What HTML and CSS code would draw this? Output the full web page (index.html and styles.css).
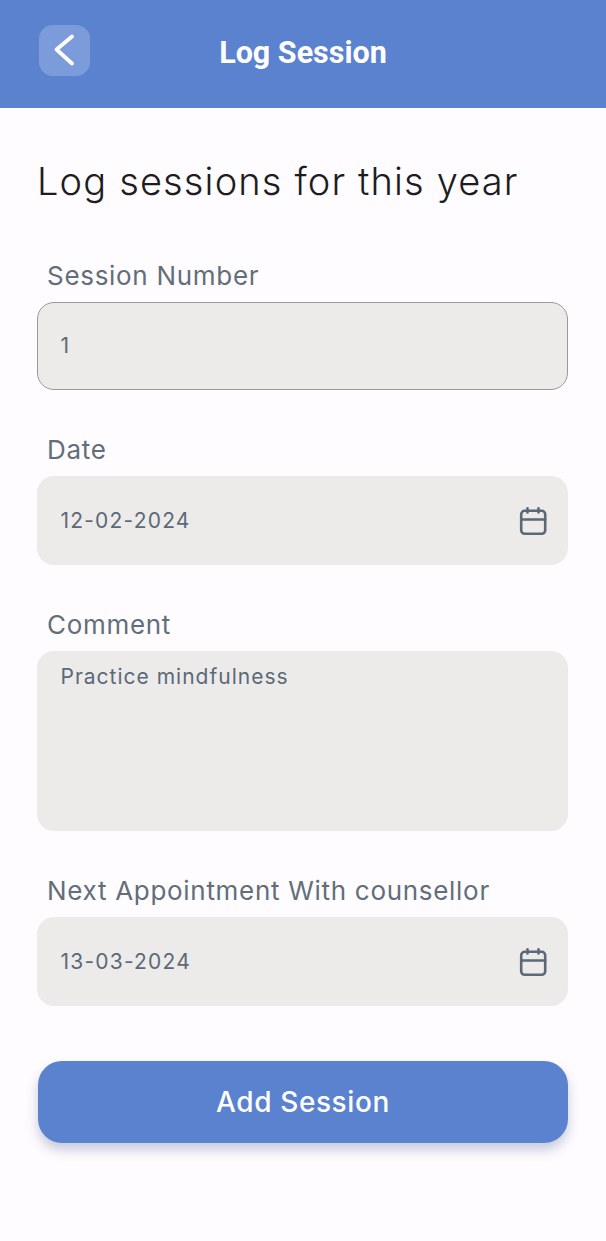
FILE: index.html
```html
<!DOCTYPE html>
<html lang="en">
<head>
<meta charset="utf-8">
<title>Log Session</title>
<link rel="stylesheet" href="styles.css">
</head>
<body>
<header class="appbar">
  <button class="back" aria-label="Back">
    <svg width="52" height="50" viewBox="0 0 52 50"><path d="M33 11.500 L17.500 24.500 L33 38.500" fill="none" stroke="#fff" stroke-width="3.800" stroke-linecap="round" stroke-linejoin="round"/></svg>
  </button>
  <h1 class="appbar-title">Log Session</h1>
</header>
<main class="content">
  <h2 class="heading">Log sessions for this year</h2>
  <div class="field">
    <label class="label">Session Number</label>
    <div class="input focused"><span class="value">1</span></div>
  </div>
  <div class="field">
    <label class="label">Date</label>
    <div class="input"><span class="value">12-02-2024</span>
      <svg class="cal" width="30" height="30" viewBox="0 0 30 30"><g fill="none" stroke="#5a6878" stroke-width="2.600" stroke-linecap="round"><rect x="3.200" y="4.800" width="24" height="23" rx="3.500"/><path d="M3.200 13.500H27.200M9.500 2.200V6.500M20.500 2.200V6.500"/></g></svg>
    </div>
  </div>
  <div class="field">
    <label class="label">Comment</label>
    <div class="input area"><span class="value small">Practice mindfulness</span></div>
  </div>
  <div class="field">
    <label class="label">Next Appointment With counsellor</label>
    <div class="input"><span class="value">13-03-2024</span>
      <svg class="cal" width="30" height="30" viewBox="0 0 30 30"><g fill="none" stroke="#5a6878" stroke-width="2.600" stroke-linecap="round"><rect x="3.200" y="4.800" width="24" height="23" rx="3.500"/><path d="M3.200 13.500H27.200M9.500 2.200V6.500M20.500 2.200V6.500"/></g></svg>
    </div>
  </div>
  <button class="submit">Add Session</button>
</main>
</body>
</html>
```
FILE: styles.css
```css
* { box-sizing: border-box; }
html, body { margin: 0; height: 100%; }
body {
  background: #fffcff;
  font-family: Inter, "Liberation Sans", sans-serif;
  overflow: hidden;
}
.appbar {
  height: 108px;
  background: #5b82cf;
  display: flex;
  align-items: center;
  justify-content: center;
  position: relative;
}
.back {
  position: absolute;
  left: 39px;
  top: 25px;
  width: 51px;
  height: 50.500px;
  border: 0;
  padding: 0;
  border-radius: 14px;
  background: #7c9bda;
  display: block;
}
.back svg { display: block; }
.appbar-title {
  margin: -2px 0 0;
  font-family: Roboto, sans-serif;
  font-weight: 700;
  font-size: 30.500px;
  line-height: 34px;
  color: #fff;
}
.content {
  padding: 50px 38px 0 37px;
  display: flex;
  flex-direction: column;
}
.heading {
  margin: 0 0 60.800px 0;
  font-weight: 350;
  font-size: 38px;
  line-height: 46px;
  letter-spacing: 1.150px;
  color: #1d1d20;
}
.field {
  display: flex;
  flex-direction: column;
  margin-bottom: 49px;
}
.field:last-of-type { margin-bottom: 55px; }
.label {
  padding-left: 10px;
  margin-top: -2px;
  margin-bottom: 14px;
  font-size: 26px;
  line-height: 25px;
  letter-spacing: 0.700px;
  font-weight: 400;
  color: #626e7a;
}
.input {
  height: 88.500px;
  background: #ecebe9;
  border-radius: 17px;
  padding: 0 20px 0 23.500px;
  display: flex;
  align-items: center;
  justify-content: space-between;
}
.input.focused { border: 1.500px solid #9a9a9a; padding-left: 22.500px; }
.input.area { height: 180.500px; align-items: flex-start; padding-top: 13px; }
.value {
  font-size: 21px;
  font-weight: 400;
  line-height: 26px;
  letter-spacing: 1.200px;
  color: #5b6979;
}
.value.small { letter-spacing: 1px; }
.cal { flex: none; }
.submit {
  height: 82px;
  margin-left: 1px;
  border: 0;
  border-radius: 24px;
  background: #5b82cf;
  color: #fff;
  font-family: Inter, sans-serif;
  font-size: 28px;
  font-weight: 450;
  letter-spacing: 0.600px;
  box-shadow: 0 7px 12px rgba(70, 90, 140, 0.3);
}
```
